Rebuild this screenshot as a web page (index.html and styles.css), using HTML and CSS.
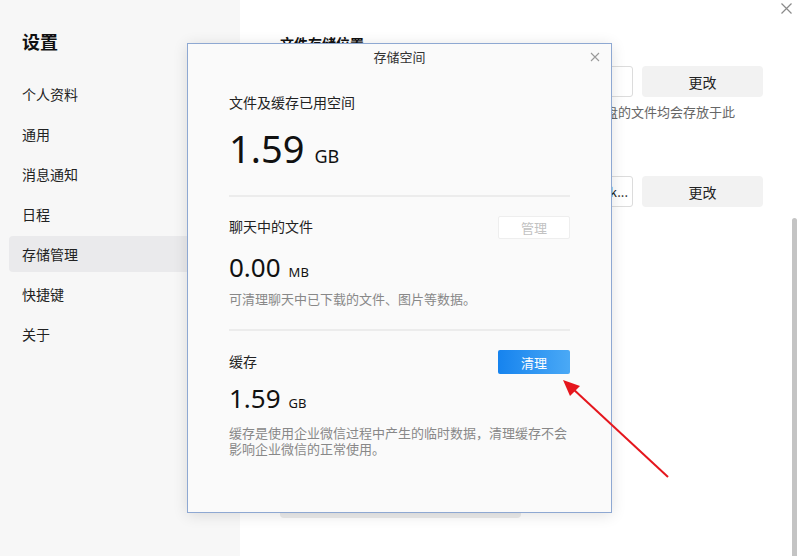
FILE: index.html
```html
<!DOCTYPE html>
<html lang="zh-CN">
<head>
  <meta charset="UTF-8" />
  <meta name="viewport" content="width=device-width, initial-scale=1.0" />
  <title>设置 - 存储管理</title>
  <link rel="stylesheet" href="styles.css">
</head>
<body>
  <!-- Sidebar -->
  <aside class="sidebar">
    <h1 class="sidebar-title">设置</h1>
    <nav class="menu">
      <div class="menu-item">个人资料</div>
      <div class="menu-item">通用</div>
      <div class="menu-item">消息通知</div>
      <div class="menu-item">日程</div>
      <div class="menu-item active">存储管理</div>
      <div class="menu-item">快捷键</div>
      <div class="menu-item">关于</div>
    </nav>
  </aside>

  <!-- Main settings panel (behind the dialog) -->
  <main class="main">
    <h2 class="section-title">文件存储位置</h2>
    <div class="field-row">
      <div class="path-box">C:\Users\Documents\WXWork</div>
      <button class="btn-grey">更改</button>
    </div>
    <p class="hint">从企业微信聊天中接收的文件、下载的文件以及保存到微盘的文件均会存放于此</p>

    <h2 class="section-title second">缓存存储位置</h2>
    <div class="field-row">
      <div class="path-box filled">C:\Users\AppData\Roaming\Tencent\WXWork...</div>
      <button class="btn-grey">更改</button>
    </div>

    <button class="btn-wide">查看存储空间</button>
  </main>

  <div class="window-close">
    <svg width="11" height="11" viewBox="0 0 11 11"><path d="M0.5 0.5L10.5 10.5M10.5 0.5L0.5 10.5" stroke="#8a8a8a" stroke-width="1.2"/></svg>
  </div>
  <div class="scrollbar"></div>

  <!-- Storage dialog -->
  <div class="dialog">
    <div class="dialog-header">
      存储空间
      <span class="dialog-close">
        <svg width="10" height="10" viewBox="0 0 10 10"><path d="M1 1L9 9M9 1L1 9" stroke="#9a9a9a" stroke-width="1.1"/></svg>
      </span>
    </div>

    <div class="dialog-body">
      <section class="block first">
        <div class="label">文件及缓存已用空间</div>
        <div class="total"><span class="num">1.59</span><span class="unit">GB</span></div>
      </section>

      <section class="block">
        <div class="row">
          <div class="label">聊天中的文件</div>
          <button class="btn-disabled">管理</button>
        </div>
        <div class="size"><span class="num">0.00</span><span class="unit">MB</span></div>
        <p class="desc">可清理聊天中已下载的文件、图片等数据。</p>
      </section>

      <section class="block last">
        <div class="row">
          <div class="label">缓存</div>
          <button class="btn-blue">清理</button>
        </div>
        <div class="size cache"><span class="num">1.59</span><span class="unit">GB</span></div>
        <p class="desc long">缓存是使用企业微信过程中产生的临时数据，清理缓存不会影响企业微信的正常使用。</p>
      </section>
    </div>
  </div>

  <!-- Annotation arrow -->
  <svg class="arrow" width="800" height="556" viewBox="0 0 800 556">
    <line x1="668" y1="477" x2="572" y2="388" stroke="#e5161d" stroke-width="2"/>
    <polygon points="563,380 580,386 570,396" fill="#e5161d"/>
  </svg>
</body>
</html>
```

FILE: styles.css
```css
/* Base */
* {
  margin: 0;
  padding: 0;
  box-sizing: border-box;
}
body {
  width: 800px;
  height: 556px;
  overflow: hidden;
  display: flex;
  background: #fff;
  color: #222;
  font-family: "Noto Sans CJK SC", "Noto Sans", sans-serif;
  font-size: 14px;
  position: relative;
}
button {
  font-family: inherit;
  border: none;
  cursor: pointer;
}

/* Sidebar */
.sidebar {
  width: 240px;
  flex-shrink: 0;
  background: #f7f7f7;
  padding: 29px 0 0 9px;
}
.sidebar-title {
  font-size: 18px;
  font-weight: bold;
  line-height: 24px;
  padding-left: 13px;
  margin-bottom: 23px;
  color: #111;
}
.menu {
  display: flex;
  flex-direction: column;
  gap: 4px;
  padding-right: 10px;
}
.menu-item {
  height: 36px;
  line-height: 36px;
  padding-left: 13px;
  font-size: 14px;
  color: #222;
  border-radius: 4px;
}
.menu-item.active {
  background: #eaeaec;
}

/* Main panel */
.main {
  flex: 1;
  padding: 33px 0 0 40px;
}
.section-title {
  font-size: 14px;
  font-weight: bold;
  line-height: 20px;
  color: #111;
}
.section-title.second {
  margin-top: 22px;
}
.field-row {
  display: flex;
  gap: 9px;
  margin-top: 13px;
}
.path-box {
  width: 353px;
  height: 31px;
  border: 1px solid #dcdcdc;
  border-radius: 3px;
  line-height: 29px;
  padding: 0 8px;
  font-size: 13px;
  white-space: nowrap;
  overflow: hidden;
}
.path-box.filled {
  text-align: right;
  padding-right: 4px;
}
.btn-grey {
  width: 121px;
  height: 31px;
  background: #f2f2f2;
  border-radius: 4px;
  font-size: 14px;
  color: #222;
}
.hint {
  margin-top: 6px;
  font-size: 13px;
  line-height: 18px;
  color: #666;
}
.btn-wide {
  display: block;
  margin-top: 275px;
  width: 241px;
  height: 36px;
  background: #ececec;
  border-radius: 4px;
  font-size: 14px;
}

.window-close {
  position: absolute;
  top: 3px;
  left: 781px;
  width: 11px;
  height: 11px;
  line-height: 0;
}
.scrollbar {
  position: absolute;
  left: 792px;
  top: 218px;
  width: 5px;
  height: 340px;
  border-radius: 3px;
  background: #c4c4c4;
}

/* Dialog */
.dialog {
  position: absolute;
  left: 187px;
  top: 43px;
  width: 425px;
  height: 470px;
  background: #fafafa;
  border: 1px solid #8ea8d2;
  box-shadow: 0 2px 14px rgba(0, 0, 0, 0.12);
}
.dialog-header {
  height: 28px;
  line-height: 26px;
  text-align: center;
  font-size: 13px;
  color: #333;
  position: relative;
}
.dialog-close {
  position: absolute;
  right: 11px;
  top: 8px;
  width: 10px;
  height: 10px;
  line-height: 0;
}
.dialog-body {
  padding: 20px 41px 0;
}
.block {
  border-bottom: 2px solid #ececec;
  padding-bottom: 22px;
  margin-bottom: 19px;
}
.block.first {
  padding-bottom: 23px;
  margin-bottom: 18px;
}
.block.last {
  border-bottom: none;
}
.label {
  font-size: 14px;
  line-height: 20px;
  color: #222;
}
.total,
.size {
  display: flex;
  align-items: baseline;
  color: #111;
  font-family: "Noto Sans", "Noto Sans CJK SC", sans-serif;
  overflow: visible;
}
.total {
  margin-top: 12px;
  height: 48px;
  line-height: 48px;
}
.total .num {
  font-size: 38px;
}
.total .unit {
  font-size: 18px;
  margin-left: 10px;
}
.row {
  display: flex;
  justify-content: space-between;
  align-items: center;
  height: 24px;
}
.row .label {
  margin-top: -3px;
}
.btn-disabled {
  width: 72px;
  height: 23px;
  background: #fff;
  border: 1px solid #eeeeee;
  border-radius: 2px;
  color: #c2c2c2;
  font-size: 13px;
}
.btn-blue {
  width: 72px;
  height: 24px;
  background: linear-gradient(90deg, #1683ee, #4aa9f6);
  border-radius: 2px;
  color: #fff;
  font-size: 13px;
}
.size {
  margin-top: 11px;
  height: 34px;
  line-height: 34px;
}
.size.cache {
  margin-top: 7px;
}
.size .num {
  font-size: 26px;
}
.size .unit {
  font-size: 13px;
  margin-left: 8px;
}
.desc {
  margin-top: 7px;
  font-size: 13px;
  line-height: 16px;
  color: #888;
}
.desc.long {
  margin-top: 10px;
}

/* Annotation */
.arrow {
  position: absolute;
  left: 0;
  top: 0;
  pointer-events: none;
}
```
